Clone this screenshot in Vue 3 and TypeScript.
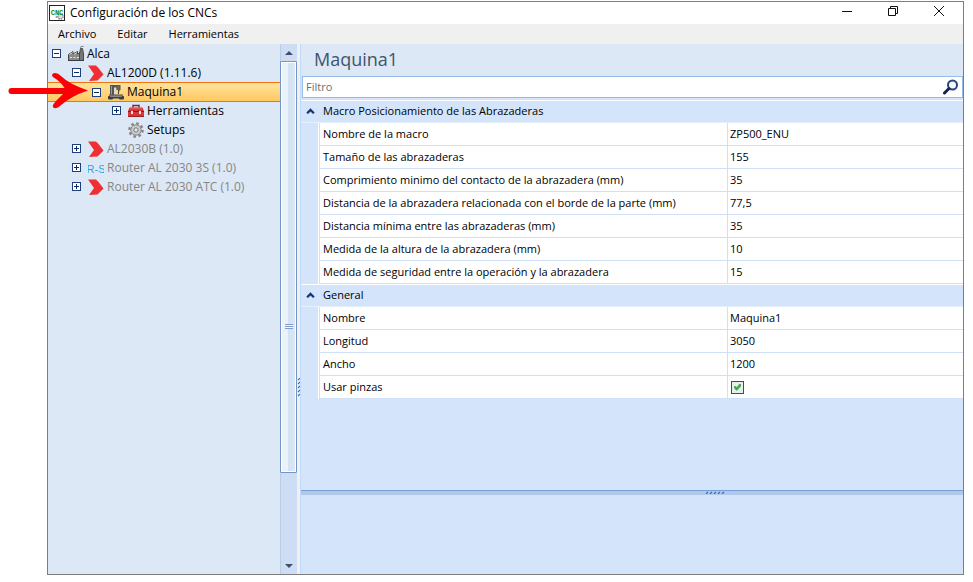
<script setup lang="ts">
import { ref } from 'vue'

type IconName = 'factory' | 'chevron' | 'machine' | 'toolbox' | 'gear' | 'rs'

interface TreeNode {
  label: string
  level: number
  icon: IconName
  expander: 'open' | 'closed' | 'none'
  muted?: boolean
}

interface Property {
  name: string
  value?: string
  checkbox?: boolean
}

interface Category {
  title: string
  properties: Property[]
}

const menus: string[] = ['Archivo', 'Editar', 'Herramientas']

const nodes: TreeNode[] = [
  { label: 'Alca', level: 0, icon: 'factory', expander: 'open' },
  { label: 'AL1200D (1.11.6)', level: 1, icon: 'chevron', expander: 'open' },
  { label: 'Maquina1', level: 2, icon: 'machine', expander: 'open' },
  { label: 'Herramientas', level: 3, icon: 'toolbox', expander: 'closed' },
  { label: 'Setups', level: 3, icon: 'gear', expander: 'none' },
  { label: 'AL2030B (1.0)', level: 1, icon: 'chevron', expander: 'closed', muted: true },
  { label: 'Router AL 2030 3S (1.0)', level: 1, icon: 'rs', expander: 'closed', muted: true },
  { label: 'Router AL 2030 ATC (1.0)', level: 1, icon: 'chevron', expander: 'closed', muted: true },
]

const categories: Category[] = [
  {
    title: 'Macro Posicionamiento de las Abrazaderas',
    properties: [
      { name: 'Nombre de la macro', value: 'ZP500_ENU' },
      { name: 'Tamaño de las abrazaderas', value: '155' },
      { name: 'Comprimiento minimo del contacto de la abrazadera (mm)', value: '35' },
      { name: 'Distancia de la abrazadera relacionada con el borde de la parte (mm)', value: '77,5' },
      { name: 'Distancia mínima entre las abrazaderas (mm)', value: '35' },
      { name: 'Medida de la altura de la abrazadera (mm)', value: '10' },
      { name: 'Medida de seguridad entre la operación y la abrazadera', value: '15' },
    ],
  },
  {
    title: 'General',
    properties: [
      { name: 'Nombre', value: 'Maquina1' },
      { name: 'Longitud', value: '3050' },
      { name: 'Ancho', value: '1200' },
      { name: 'Usar pinzas', checkbox: true },
    ],
  },
]

const selected = ref('Maquina1')
const filter = ref('')
const useClamps = ref(true)
</script>

<template>
  <div class="page">
    <main class="window">
      <header class="titlebar">
        <svg class="app-icon" viewBox="0 0 16 16" aria-hidden="true">
          <rect x="0.5" y="0.5" width="15" height="15" fill="#fff" stroke="#222" />
          <circle cx="11.500" cy="11.500" r="2.600" fill="#ddd" stroke="#888" stroke-width="1.500" stroke-dasharray="1.500 0.800" />
          <circle cx="7.500" cy="12" r="1" fill="#999" />
          <text class="app-mark" x="8" y="10" text-anchor="middle">CNC</text>
        </svg>
        <h1>Configuración de los CNCs</h1>
        <div class="window-buttons">
          <button type="button" aria-label="Minimizar">
            <svg viewBox="0 0 12 12"><path d="M1 6.500h10" /></svg>
          </button>
          <button type="button" aria-label="Restaurar">
            <svg viewBox="0 0 12 12"><path d="M1.500 3.500h7v7h-7zM3.500 3.500v-2h7v7h-2" /></svg>
          </button>
          <button type="button" aria-label="Cerrar">
            <svg viewBox="0 0 12 12"><path d="M1 1l10 10M11 1L1 11" /></svg>
          </button>
        </div>
      </header>

      <nav class="menubar">
        <button v-for="m in menus" :key="m" type="button">{{ m }}</button>
      </nav>

      <div class="workspace">
        <ul class="tree" role="tree">
          <li
            v-for="n in nodes"
            :key="n.label"
            role="treeitem"
            :aria-selected="selected === n.label"
            :class="['node', `level-${n.level}`, { selected: selected === n.label, muted: n.muted }]"
            @click="selected = n.label"
          >
            <span class="expander">
              <svg v-if="n.expander !== 'none'" viewBox="0 0 9 9">
                <rect x="0.500" y="0.500" width="8" height="8" fill="#fff" stroke="#1e3f79" />
                <path d="M2 4.500h5" stroke="#102a60" />
                <path v-if="n.expander === 'closed'" d="M4.500 2v5" stroke="#102a60" />
              </svg>
            </span>
            <svg v-if="n.icon === 'factory'" class="icon" viewBox="0 0 16 16" aria-hidden="true">
              <path d="M0.500 14.500V8.500L5 5.500V8L9.500 5.500V8L12 6.500V14.500z" fill="#8b8b8b" stroke="#454545" />
              <path d="M1.500 8.500L4.500 6.500M6 8.500L9 6.500" stroke="#d5d5d5" />
              <path d="M11.500 14.500V8L12.500 2.500H14.500L15.500 8V14.500z" fill="#777" stroke="#484848" />
              <path d="M12 1.500Q13.500 0 15.500 0.500" fill="none" stroke="#777" />
              <path d="M2 11.500h2M5.500 11.500h2M9 11.500h2" stroke="#e4e4e4" />
              <path d="M0 14.500h16" stroke="#3c3c3c" />
            </svg>
            <svg v-else-if="n.icon === 'chevron'" class="icon" viewBox="0 0 16 16" aria-hidden="true">
              <path d="M0 0.500H8L10.500 3L15.500 9.500L9.500 15.500L1 16L6 9z" fill="#ee3035" />
            </svg>
            <svg v-else-if="n.icon === 'machine'" class="icon" viewBox="0 0 16 16" aria-hidden="true">
              <path d="M2 1h10.500v5h-1v1.500h-1.500V6H8.500V3.500H6V11H2z" fill="#555" />
              <path d="M3.500 2v9" stroke="#999" />
              <path d="M6.500 4v7" stroke="#d8d8d8" />
              <path d="M8.500 2h3v3.500h-3z" fill="#666" />
              <path d="M10.500 6v4" stroke="#444" />
              <path d="M1.500 11h13v2.500h-13z" fill="#8b8b8b" />
              <path d="M1 11h14" stroke="#555" />
              <path d="M0.500 15V12.500h1.500v1h12v-1h1.500V15h-4v-1H4.500v1z" fill="#3f3f3f" stroke="#3f3f3f" />
            </svg>
            <svg v-else-if="n.icon === 'toolbox'" class="icon" viewBox="0 0 16 16" aria-hidden="true">
              <path d="M5 5V2.500h6V5" fill="none" stroke="#8d2323" stroke-width="1.500" />
              <path d="M1.500 4.500h13L16 8v6H0V8z" fill="#d6383a" />
              <path d="M2 5h12" stroke="#ed7776" />
              <path d="M0 8.500h16" stroke="#821b20" />
              <path d="M0 13.500h16" stroke="#9b2328" />
              <path d="M3 8h2v3H3zM11 8h2v3h-2z" fill="#f1e3e2" />
            </svg>
            <svg v-else-if="n.icon === 'gear'" class="icon" viewBox="0 0 16 16" aria-hidden="true">
              <circle cx="8" cy="8" r="6.600" fill="none" stroke="#858585" stroke-width="2.400" stroke-dasharray="2.600 2.584" />
              <circle cx="8" cy="8" r="5.200" fill="#ccc" stroke="#858585" />
              <circle cx="8" cy="8" r="2.200" fill="#dce8f6" stroke="#777" />
            </svg>
            <svg v-else class="icon" viewBox="0 0 16 16" aria-hidden="true">
              <text class="rs-mark" x="8" y="13" text-anchor="middle">R-S</text>
            </svg>
            <span class="label">{{ n.label }}</span>
          </li>
        </ul>

        <div class="scrollbar">
          <button type="button" aria-label="Subir">
            <svg viewBox="0 0 8 4"><path d="M0 4L4 0L8 4z" /></svg>
          </button>
          <div class="track">
            <div class="thumb">
              <span class="thumb-grip"></span>
            </div>
          </div>
          <button type="button" aria-label="Bajar">
            <svg viewBox="0 0 8 4"><path d="M0 0H8L4 4z" /></svg>
          </button>
        </div>

        <div class="splitter">
          <svg viewBox="0 0 3 20" aria-hidden="true">
            <path
              d="M1 2L3 0M1 6L3 4M1 10L3 8M1 14L3 12M1 18L3 16"
              stroke="#3a72bd"
              stroke-width="1.200"
            />
          </svg>
        </div>

        <section class="details">
          <h2>{{ selected }}</h2>
          <div class="filter">
            <input v-model="filter" type="text" placeholder="Filtro" aria-label="Filtro" />
            <button type="button" aria-label="Buscar">
              <svg viewBox="0 0 16 16">
                <circle cx="9.500" cy="6" r="4.500" fill="#f5f9ff" stroke="#27457c" stroke-width="2" />
                <path d="M6 9.500L1.500 14" stroke="#14264f" stroke-width="3" stroke-linecap="round" />
              </svg>
            </button>
          </div>

          <table class="grid">
            <colgroup>
              <col class="gutter-col" />
              <col class="name-col" />
              <col class="value-col" />
            </colgroup>
            <tbody v-for="c in categories" :key="c.title">
              <tr class="category">
                <td class="toggle">
                  <svg viewBox="0 0 8 5" aria-hidden="true">
                    <path d="M1 4.500L4 1.500L7 4.500" fill="none" stroke="#17356f" stroke-width="2" />
                  </svg>
                </td>
                <th colspan="2" scope="rowgroup">{{ c.title }}</th>
              </tr>
              <tr v-for="p in c.properties" :key="p.name" class="property">
                <td class="gutter"></td>
                <th scope="row">
                  <label v-if="p.checkbox" for="use-clamps">{{ p.name }}</label>
                  <template v-else>{{ p.name }}</template>
                </th>
                <td class="value">
                  <input v-if="p.checkbox" id="use-clamps" v-model="useClamps" type="checkbox" />
                  <template v-else>{{ p.value }}</template>
                </td>
              </tr>
            </tbody>
          </table>

          <div class="divider">
            <svg viewBox="0 0 20 3" aria-hidden="true">
              <path
                d="M1 3L3 1M5 3L7 1M9 3L11 1M13 3L15 1M17 3L19 1"
                stroke="#2f6fc0"
                stroke-width="1.200"
              />
            </svg>
          </div>
          <div class="description"></div>
        </section>
      </div>
    </main>

    <svg class="pointer" viewBox="0 0 82 38" aria-hidden="true">
      <path d="M4.500 19H70" fill="none" stroke="#fb0007" stroke-width="6" stroke-linecap="round" />
      <path
        d="M46 1.500Q50 0 54 4Q62 12 81 18.500Q64 24 53 34Q48 38 46 35Q45 33 49 29Q55 23 59 19Q56 12 49 7Q43 4 46 1.500z"
        fill="#fb0007"
      />
    </svg>
  </div>
</template>

<style>
body {
  background: #fff;
}
</style>

<style scoped>
.page {
  position: relative;
  box-sizing: border-box;
  height: 100vh;
  padding: 1px 9px 7px 47px;
  font-family: 'Open Sans', 'Noto Sans', sans-serif;
  font-size: 11px;
  color: #000;
}

button {
  display: flex;
  align-items: center;
  justify-content: center;
  padding: 0;
  border: 0;
  background: none;
  color: inherit;
  font: inherit;
}

.window {
  display: flex;
  flex-direction: column;
  box-sizing: border-box;
  height: 100%;
  border: 1px solid #7d7d7d;
}

.titlebar {
  display: flex;
  align-items: center;
  flex: none;
  height: 22px;
  padding-left: 1px;
  gap: 5px;
  background: #fff;
}

.app-icon {
  width: 16px;
  height: 16px;
}

.app-mark {
  fill: #0d8a24;
  font: 700 7px 'Liberation Mono', monospace;
}

.rs-mark {
  fill: #2ba6d8;
  font: 11px 'Liberation Sans', sans-serif;
}

h1 {
  flex: 1;
  margin: 0;
  font-size: 12px;
  font-weight: 400;
  line-height: 22px;
}

.window-buttons {
  display: flex;
  align-self: flex-start;
  padding-right: 1px;
}

.window-buttons button {
  width: 46px;
  height: 18px;
}

.window-buttons svg {
  width: 12px;
  height: 12px;
  fill: none;
  stroke: #111;
}

.menubar {
  display: flex;
  flex: none;
  box-sizing: border-box;
  height: 20px;
  padding: 0 0 2px 10px;
  gap: 21px;
  background: #f0f0f0;
}

.workspace {
  display: flex;
  flex: 1;
  min-height: 0;
}

.tree {
  flex: 0 0 232px;
  margin: 0;
  padding: 0;
  background: #dce8f6;
  list-style: none;
}

.node {
  display: flex;
  align-items: center;
  box-sizing: border-box;
  height: 19px;
  padding-left: 4px;
  font-size: 12px;
  line-height: 18px;
  white-space: nowrap;
}

.level-1 {
  padding-left: 24px;
}

.level-2 {
  padding-left: 44px;
}

.level-3 {
  padding-left: 64px;
}

.selected {
  height: 20px;
  margin-bottom: -1px;
  border: solid #f0730f;
  border-width: 1px 0;
  background: linear-gradient(#ffe3a0, #ffc960);
}

.muted {
  color: #868686;
}

.expander {
  width: 9px;
  height: 9px;
  margin-right: 7px;
}

.expander svg {
  display: block;
}

.icon {
  width: 16px;
  height: 16px;
  margin-right: 3px;
}

.scrollbar {
  display: flex;
  flex: 0 0 17px;
  flex-direction: column;
  box-sizing: border-box;
  border-left: 1px solid #b9cde9;
  background: #cdddf4;
}

.scrollbar button {
  height: 17px;
}

.scrollbar svg {
  width: 8px;
  height: 4px;
  fill: #414c6b;
}

.track {
  display: flex;
  flex: 1;
  flex-direction: column;
}

.thumb {
  display: flex;
  align-items: center;
  flex-direction: column;
  box-sizing: border-box;
  height: 83%;
  margin-left: -1px;
  border: 1px solid #7595c4;
  border-radius: 1px;
  background: linear-gradient(90deg, #eaf2fb 45%, #d3e1f2 45%, #dbe8f6);
  box-shadow: inset 0 0 0 1px #fff;
}

.thumb::before {
  flex: 0 0 64%;
  content: '';
}

.thumb-grip {
  width: 8px;
  height: 5px;
  background: repeating-linear-gradient(#7f9ccc 0 1px, #f2f7fd 1px 2px);
}

.splitter {
  display: flex;
  flex: 0 0 4px;
  flex-direction: column;
  box-sizing: border-box;
  border-right: 1px solid #c1dafa;
  background: #f0f0f0;
}

.splitter::before {
  flex: 0 0 63%;
  content: '';
}

.splitter svg {
  width: 3px;
  height: 20px;
}

.details {
  display: flex;
  flex: 1;
  flex-direction: column;
  min-width: 0;
  background: #d4e5fb;
}

h2 {
  flex: none;
  box-sizing: border-box;
  height: 32px;
  margin: 0;
  padding-left: 13px;
  background: #dce8f6;
  color: #40546a;
  font-size: 18px;
  font-weight: 400;
  line-height: 30px;
}

.filter {
  display: flex;
  flex: none;
  box-sizing: border-box;
  height: 22px;
  margin-left: 1px;
  border: 1px solid #99bbe8;
  background: #fff;
}

.filter input {
  flex: 1;
  min-width: 0;
  padding: 0 3px 2px;
  border: 0;
  outline: 0;
  background: none;
  font: inherit;
}

.filter input::placeholder {
  color: #6d6d6d;
  opacity: 1;
}

.filter button {
  width: 22px;
}

.filter svg {
  width: 16px;
  height: 16px;
}

.grid {
  width: 100%;
  margin-top: 2px;
  border-collapse: separate;
  border-spacing: 0;
  table-layout: fixed;
}

.gutter-col {
  width: 18px;
}

.value-col {
  width: 236px;
}

.grid th,
.grid td {
  box-sizing: border-box;
  height: 23px;
  padding: 0 2px;
  font-weight: 400;
  line-height: 16px;
  text-align: left;
  white-space: nowrap;
}

.grid .category th,
.grid .category .toggle {
  border-top: 1px solid #fff;
  border-bottom: 1px solid #e6f0fd;
}

.grid .category th {
  padding: 0 4px 2px;
}

.grid .category .toggle {
  padding: 0 0 1px 5px;
}

.toggle svg {
  display: block;
  width: 9px;
  height: 6px;
}

.grid .gutter {
  border-right: 1px solid #fff;
}

.property th,
.property .value {
  border-bottom: 1px solid #cfe0f7;
  border-left: 1px solid #cfe0f7;
  background: #fff;
}

.grid .property th {
  padding-left: 3px;
}

.value input {
  display: block;
  box-sizing: border-box;
  width: 13px;
  height: 13px;
  margin: 0 1px;
  border: 1px solid #1f5687;
  appearance: none;
  background: #e9edf0;
}

.value input:checked::after {
  display: block;
  width: 7px;
  height: 7px;
  margin: 2px;
  background: #41ad49;
  clip-path: polygon(0 40%, 25% 35%, 40% 55%, 80% 0, 100% 10%, 100% 40%, 45% 100%, 30% 100%, 0 65%);
  content: '';
}

.divider {
  display: flex;
  flex: none;
  box-sizing: border-box;
  height: 5px;
  margin-top: auto;
  border-top: 1px solid #76a0d9;
  background: #b1c8e8;
}

.divider::before {
  flex: 0 0 61%;
  content: '';
}

.divider svg {
  width: 20px;
  height: 3px;
}

.description {
  flex: none;
  height: 15%;
}

.pointer {
  position: absolute;
  top: 72px;
  left: 7px;
  width: 82px;
  height: 38px;
}
</style>
